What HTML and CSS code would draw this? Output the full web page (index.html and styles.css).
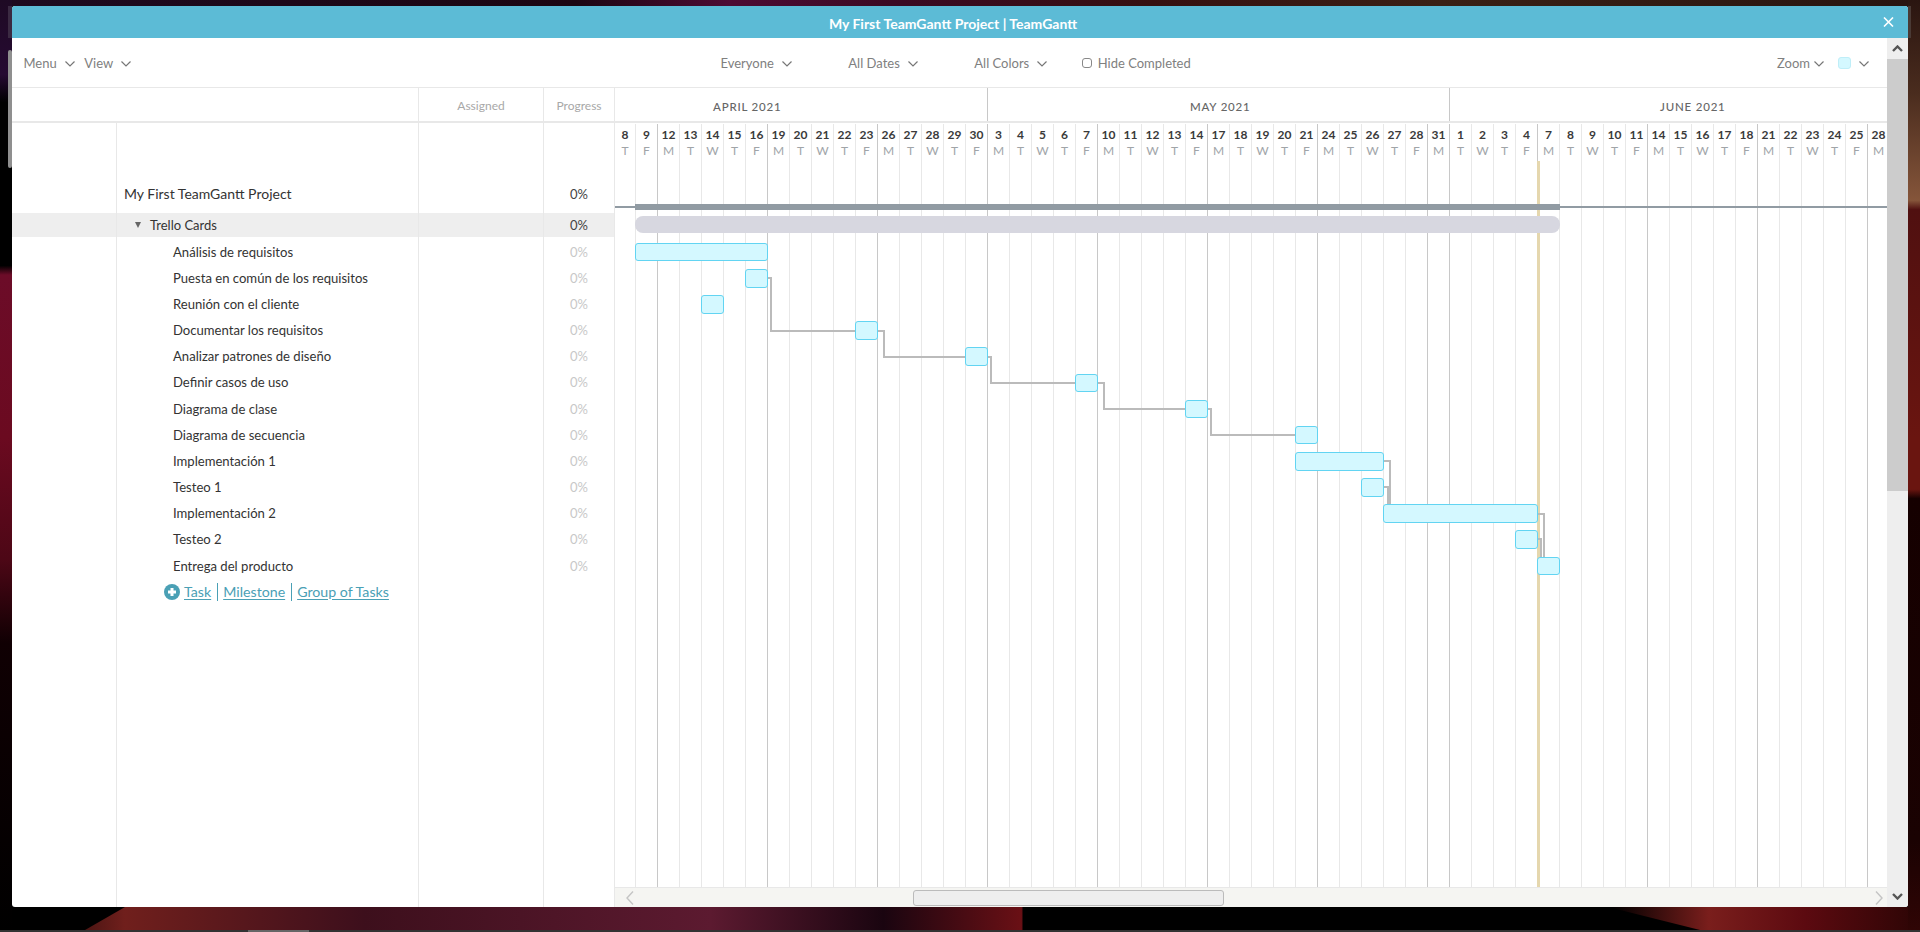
FILE: index.html
```html
<!DOCTYPE html>
<html lang="en">
  <head>
    <meta charset="UTF-8">
    <title>My First TeamGantt Project | TeamGantt</title>
    <link rel="stylesheet" href="styles.css">
  </head>
  <body>
    <svg class="wallpaper" width="1920" height="932" viewBox="0 0 1920 932">
      <defs>
        <linearGradient id="wallTop">
          <stop offset="0" stop-color="#1e0a1f"/>
          <stop offset="0.3" stop-color="#1c0612"/>
          <stop offset="0.38" stop-color="#4d0b33"/>
          <stop offset="0.47" stop-color="#3a0a22"/>
          <stop offset="0.6" stop-color="#361010"/>
          <stop offset="0.75" stop-color="#3a2015"/>
          <stop offset="1" stop-color="#281410"/>
        </linearGradient>
        <linearGradient id="wallBottom">
          <stop offset="0" stop-color="#000"/>
          <stop offset="0.065" stop-color="#701f1c"/>
          <stop offset="0.19" stop-color="#3d0f1c"/>
          <stop offset="0.37" stop-color="#5c1a30"/>
          <stop offset="0.46" stop-color="#1a0510"/>
          <stop offset="0.532" stop-color="#6a1015"/>
          <stop offset="0.533" stop-color="#000"/>
          <stop offset="0.84" stop-color="#000"/>
          <stop offset="0.89" stop-color="#7a1e1c"/>
          <stop offset="0.94" stop-color="#5c0a10"/>
          <stop offset="1" stop-color="#2c0505"/>
        </linearGradient>
        <linearGradient id="wallLeft" x2="0" y2="1">
          <stop offset="0" stop-color="#1e0a24"/>
          <stop offset="0.08" stop-color="#260a32"/>
          <stop offset="0.11" stop-color="#000"/>
          <stop offset="0.285" stop-color="#000"/>
          <stop offset="0.295" stop-color="#6c0c28"/>
          <stop offset="0.47" stop-color="#6b0a20"/>
          <stop offset="0.6" stop-color="#4d0716"/>
          <stop offset="0.69" stop-color="#100003"/>
          <stop offset="1" stop-color="#000"/>
        </linearGradient>
        <linearGradient id="wallRight" x2="0" y2="1">
          <stop offset="0" stop-color="#2a1510"/>
          <stop offset="0.1" stop-color="#4a2c1e"/>
          <stop offset="0.215" stop-color="#85553a"/>
          <stop offset="0.225" stop-color="#501010"/>
          <stop offset="0.47" stop-color="#6a1510"/>
          <stop offset="0.525" stop-color="#6a1510"/>
          <stop offset="0.535" stop-color="#150000"/>
          <stop offset="0.9" stop-color="#1a0202"/>
          <stop offset="1" stop-color="#300505"/>
        </linearGradient>
      </defs>
      <rect width="1920" height="6" fill="url(#wallTop)"/>
      <rect y="907" width="1920" height="25" fill="url(#wallBottom)"/>
      <polygon points="0,907 125,907 85,930 0,930" fill="#000"/>
      <polygon points="1608,907 1700,930 1500,930 1500,907" fill="#000"/>
      <rect width="12" height="932" fill="url(#wallLeft)"/>
      <rect x="1908" width="12" height="932" fill="url(#wallRight)"/>
      <rect x="8" y="6" width="4" height="32" fill="#3b2a42"/>
      <rect x="8" y="50" width="4" height="118" rx="2" fill="#8f8f8f"/>
      <rect x="1908" y="6" width="3" height="32" fill="#4a3a35"/>
      <rect y="930" width="1920" height="2" fill="#333"/>
      <rect x="248" y="930" width="61" height="2" fill="#666"/>
    </svg>

    <div class="modal">
      <div class="title-bar">
        <span class="title-text">My First TeamGantt Project | TeamGantt</span>
        <svg class="close" width="11" height="10" viewBox="0 0 11 10"><path d="M1 0.5 L10 9.5 M10 0.5 L1 9.5"/></svg>
      </div>

      <div class="content">
        <div class="main">
          <div class="toolbar">
            <div class="tb-group tb-left">
              <span class="tb-item">Menu <svg class="chev" viewBox="0 0 10 6"><polyline points="0.5,0.5 5,5 9.5,0.5"/></svg></span>
              <span class="tb-item">View <svg class="chev" viewBox="0 0 10 6"><polyline points="0.5,0.5 5,5 9.5,0.5"/></svg></span>
            </div>
            <div class="tb-group tb-center">
              <span class="tb-item">Everyone <svg class="chev" viewBox="0 0 10 6"><polyline points="0.5,0.5 5,5 9.5,0.5"/></svg></span>
              <span class="tb-item">All Dates <svg class="chev" viewBox="0 0 10 6"><polyline points="0.5,0.5 5,5 9.5,0.5"/></svg></span>
              <span class="tb-item">All Colors <svg class="chev" viewBox="0 0 10 6"><polyline points="0.5,0.5 5,5 9.5,0.5"/></svg></span>
              <label class="tb-item hide-completed"><input type="checkbox"> Hide Completed</label>
            </div>
            <div class="tb-group tb-right">
              <span class="tb-item zoom-item">Zoom <svg class="chev" viewBox="0 0 10 6"><polyline points="0.5,0.5 5,5 9.5,0.5"/></svg></span>
              <span class="tb-item swatch-item"><span class="swatch"></span> <svg class="chev" viewBox="0 0 10 6"><polyline points="0.5,0.5 5,5 9.5,0.5"/></svg></span>
            </div>
          </div>

          <div class="gantt">
            <div class="left-panel">
              <div class="row head-row">
                <div class="cell no-line"></div>
                <div class="cell"></div>
                <div class="cell col-head">Assigned</div>
                <div class="cell col-head">Progress</div>
              </div>
              <div class="row spacer-row">
                <div class="cell"></div><div class="cell"></div><div class="cell"></div><div class="cell"></div>
              </div>
              <div class="row project-row">
                <div class="cell"></div>
                <div class="cell name">My First TeamGantt Project</div>
                <div class="cell"></div>
                <div class="cell pct">0%</div>
              </div>
              <div class="row group-row">
                <div class="cell"></div>
                <div class="cell name"><span class="caret"></span>Trello Cards</div>
                <div class="cell"></div>
                <div class="cell pct">0%</div>
              </div>
              <div class="row gap-row">
                <div class="cell"></div><div class="cell"></div><div class="cell"></div><div class="cell"></div>
              </div>
              <div class="row task-row"><div class="cell"></div><div class="cell name">Análisis de requisitos</div><div class="cell"></div><div class="cell pct">0%</div></div>
              <div class="row task-row"><div class="cell"></div><div class="cell name">Puesta en común de los requisitos</div><div class="cell"></div><div class="cell pct">0%</div></div>
              <div class="row task-row"><div class="cell"></div><div class="cell name">Reunión con el cliente</div><div class="cell"></div><div class="cell pct">0%</div></div>
              <div class="row task-row"><div class="cell"></div><div class="cell name">Documentar los requisitos</div><div class="cell"></div><div class="cell pct">0%</div></div>
              <div class="row task-row"><div class="cell"></div><div class="cell name">Analizar patrones de diseño</div><div class="cell"></div><div class="cell pct">0%</div></div>
              <div class="row task-row"><div class="cell"></div><div class="cell name">Definir casos de uso</div><div class="cell"></div><div class="cell pct">0%</div></div>
              <div class="row task-row"><div class="cell"></div><div class="cell name">Diagrama de clase</div><div class="cell"></div><div class="cell pct">0%</div></div>
              <div class="row task-row"><div class="cell"></div><div class="cell name">Diagrama de secuencia</div><div class="cell"></div><div class="cell pct">0%</div></div>
              <div class="row task-row"><div class="cell"></div><div class="cell name">Implementación 1</div><div class="cell"></div><div class="cell pct">0%</div></div>
              <div class="row task-row"><div class="cell"></div><div class="cell name">Testeo 1</div><div class="cell"></div><div class="cell pct">0%</div></div>
              <div class="row task-row"><div class="cell"></div><div class="cell name">Implementación 2</div><div class="cell"></div><div class="cell pct">0%</div></div>
              <div class="row task-row"><div class="cell"></div><div class="cell name">Testeo 2</div><div class="cell"></div><div class="cell pct">0%</div></div>
              <div class="row task-row"><div class="cell"></div><div class="cell name">Entrega del producto</div><div class="cell"></div><div class="cell pct">0%</div></div>
              <div class="row add-row">
                <div class="cell"></div>
                <div class="cell add-links">
                  <svg class="add-icon" width="16" height="16" viewBox="0 0 16 16"><circle cx="8" cy="8" r="8"/><path d="M8 4 V12 M4 8 H12"/></svg>
                  <a href="#">Task</a><a href="#">Milestone</a><a href="#">Group of Tasks</a>
                </div>
                <div class="cell"></div>
                <div class="cell"></div>
              </div>
              <div class="row filler-row">
                <div class="cell"></div><div class="cell"></div><div class="cell"></div><div class="cell"></div>
              </div>
            </div>

            <div class="chart">
              <div class="months">
                <div class="month month-apr">APRIL 2021</div>
                <div class="month month-may">MAY 2021</div>
                <div class="month month-jun">JUNE 2021</div>
              </div>
              <div class="days">
                <div class="day first"><b>8</b><span>T</span></div>
                <div class="day strong"><b>9</b><span>F</span></div>
                <div class="day"><b>12</b><span>M</span></div>
                <div class="day"><b>13</b><span>T</span></div>
                <div class="day"><b>14</b><span>W</span></div>
                <div class="day"><b>15</b><span>T</span></div>
                <div class="day strong"><b>16</b><span>F</span></div>
                <div class="day"><b>19</b><span>M</span></div>
                <div class="day"><b>20</b><span>T</span></div>
                <div class="day"><b>21</b><span>W</span></div>
                <div class="day"><b>22</b><span>T</span></div>
                <div class="day strong"><b>23</b><span>F</span></div>
                <div class="day"><b>26</b><span>M</span></div>
                <div class="day"><b>27</b><span>T</span></div>
                <div class="day"><b>28</b><span>W</span></div>
                <div class="day"><b>29</b><span>T</span></div>
                <div class="day strong"><b>30</b><span>F</span></div>
                <div class="day"><b>3</b><span>M</span></div>
                <div class="day"><b>4</b><span>T</span></div>
                <div class="day"><b>5</b><span>W</span></div>
                <div class="day"><b>6</b><span>T</span></div>
                <div class="day strong"><b>7</b><span>F</span></div>
                <div class="day"><b>10</b><span>M</span></div>
                <div class="day"><b>11</b><span>T</span></div>
                <div class="day"><b>12</b><span>W</span></div>
                <div class="day"><b>13</b><span>T</span></div>
                <div class="day strong"><b>14</b><span>F</span></div>
                <div class="day"><b>17</b><span>M</span></div>
                <div class="day"><b>18</b><span>T</span></div>
                <div class="day"><b>19</b><span>W</span></div>
                <div class="day"><b>20</b><span>T</span></div>
                <div class="day strong"><b>21</b><span>F</span></div>
                <div class="day"><b>24</b><span>M</span></div>
                <div class="day"><b>25</b><span>T</span></div>
                <div class="day"><b>26</b><span>W</span></div>
                <div class="day"><b>27</b><span>T</span></div>
                <div class="day strong"><b>28</b><span>F</span></div>
                <div class="day strong"><b>31</b><span>M</span></div>
                <div class="day"><b>1</b><span>T</span></div>
                <div class="day"><b>2</b><span>W</span></div>
                <div class="day"><b>3</b><span>T</span></div>
                <div class="day strong"><b>4</b><span>F</span></div>
                <div class="day"><b>7</b><span>M</span></div>
                <div class="day"><b>8</b><span>T</span></div>
                <div class="day"><b>9</b><span>W</span></div>
                <div class="day"><b>10</b><span>T</span></div>
                <div class="day strong"><b>11</b><span>F</span></div>
                <div class="day"><b>14</b><span>M</span></div>
                <div class="day"><b>15</b><span>T</span></div>
                <div class="day"><b>16</b><span>W</span></div>
                <div class="day"><b>17</b><span>T</span></div>
                <div class="day strong"><b>18</b><span>F</span></div>
                <div class="day"><b>21</b><span>M</span></div>
                <div class="day"><b>22</b><span>T</span></div>
                <div class="day"><b>23</b><span>W</span></div>
                <div class="day"><b>24</b><span>T</span></div>
                <div class="day strong"><b>25</b><span>F</span></div>
                <div class="day"><b>28</b><span>M</span></div>
              </div>
              <div class="hscroll">
                <svg class="hs-arrow" width="8" height="14" viewBox="0 0 8 14"><polyline points="7,0.5 1,7 7,13.5"/></svg>
                <div class="hs-thumb"></div>
                <svg class="hs-arrow" width="8" height="14" viewBox="0 0 8 14"><polyline points="1,0.5 7,7 1,13.5"/></svg>
              </div>

              <!-- bars sit on the chart canvas, left = 22 * day index - 2 -->
              <div class="line-today"></div>
              <div class="line-project"></div>
              <div class="bar-project"></div>
              <div class="bar-group"></div>

              <svg class="links" width="1272" height="799" viewBox="0 0 1272 799">
                <polyline points="153,190 156,190 156,243 240,243"/>
                <polyline points="263,243 269,243 269,269 350,269"/>
                <polyline points="373,269 376,269 376,295 460,295"/>
                <polyline points="483,295 489,295 489,321 570,321"/>
                <polyline points="593,321 596,321 596,347 680,347"/>
                <polyline points="769,373 775,373 775,416"/>
                <polyline points="769,399 773,399 773,416"/>
                <polyline points="923,426 929,426 929,469"/>
                <polyline points="923,451 926,451 926,469"/>
              </svg>

              <div class="task-bar" style="left:20px;top:155px;width:133px;height:18px"></div>
              <div class="task-bar" style="left:130px;top:181px;width:23px;height:19px"></div>
              <div class="task-bar" style="left:86px;top:207px;width:23px;height:19px"></div>
              <div class="task-bar" style="left:240px;top:233px;width:23px;height:19px"></div>
              <div class="task-bar" style="left:350px;top:259px;width:23px;height:19px"></div>
              <div class="task-bar" style="left:460px;top:286px;width:23px;height:18px"></div>
              <div class="task-bar" style="left:570px;top:312px;width:23px;height:18px"></div>
              <div class="task-bar" style="left:680px;top:338px;width:23px;height:18px"></div>
              <div class="task-bar" style="left:680px;top:364px;width:89px;height:19px"></div>
              <div class="task-bar" style="left:746px;top:390px;width:23px;height:19px"></div>
              <div class="task-bar" style="left:768px;top:416px;width:155px;height:19px"></div>
              <div class="task-bar" style="left:900px;top:442px;width:23px;height:19px"></div>
              <div class="task-bar" style="left:922px;top:469px;width:23px;height:18px"></div>
            </div>
          </div>
        </div>

        <div class="vscroll">
          <div class="vs-btn"><svg width="11" height="7" viewBox="0 0 11 7"><polyline points="1,6 5.5,1.5 10,6"/></svg></div>
          <div class="vs-thumb"></div>
          <div class="vs-track"></div>
          <div class="vs-btn vs-down"><svg width="11" height="7" viewBox="0 0 11 7"><polyline points="1,1 5.5,5.5 10,1"/></svg></div>
        </div>
      </div>
    </div>
  </body>
</html>
```

FILE: styles.css
```css
html,
body {
  margin: 0;
  padding: 0;
}

body {
  position: relative;
  width: 1920px;
  height: 932px;
  overflow: hidden;
  background: #000;
  font-family: Lato, "Open Sans", Arial, sans-serif;
  color: #333;
}

.wallpaper {
  position: absolute;
  top: 0;
  left: 0;
}

.modal {
  position: relative;
  display: flex;
  flex-direction: column;
  width: 1896px;
  height: 901px;
  margin: 6px 0 0 12px;
  background: #fff;
  border-radius: 3px;
  overflow: hidden;
}

/* title bar */
.title-bar {
  position: relative;
  flex: 0 0 32px;
  box-sizing: border-box;
  display: flex;
  align-items: center;
  justify-content: center;
  padding: 2px 14px 0 0;
  background: #5cbbd6;
}

.title-text {
  color: #fff;
  font-size: 14px;
  font-weight: 700;
}

.close {
  position: absolute;
  top: 11px;
  right: 14px;
}

.close path {
  stroke: #fff;
  stroke-width: 1.6;
  fill: none;
}

.content {
  flex: 1;
  display: flex;
  min-height: 0;
}

.main {
  flex: 1;
  display: flex;
  flex-direction: column;
  min-width: 0;
}

/* toolbar */
.toolbar {
  flex: 0 0 50px;
  box-sizing: border-box;
  display: flex;
  justify-content: space-between;
  align-items: center;
  padding: 0 18px 0 11.5px;
  border-bottom: 1px solid #e8e8e8;
}

.tb-group {
  display: flex;
  align-items: center;
}

.tb-left {
  gap: 9.5px;
}

.tb-center {
  gap: 56.5px;
  margin-left: 3px;
}

.tb-right {
  gap: 14px;
}

.tb-item {
  display: flex;
  align-items: center;
  gap: 8px;
  color: #808080;
  font-size: 13px;
  white-space: nowrap;
}

.chev {
  width: 10px;
  height: 6px;
  margin-top: 2px;
}

.chev polyline {
  fill: none;
  stroke: #777;
  stroke-width: 1.2;
}

.zoom-item {
  gap: 4px;
}

.swatch {
  display: block;
  box-sizing: border-box;
  width: 13px;
  height: 12px;
  background: #d4f8ff;
  border: 1px solid #bfeef8;
  border-radius: 3px;
}

.hide-completed {
  gap: 6px;
  margin-left: -22px;
}

.hide-completed input {
  appearance: none;
  box-sizing: border-box;
  width: 10px;
  height: 10px;
  margin: 0;
  border: 1px solid #888;
  border-radius: 3px;
  background: #fff;
}

/* gantt */
.gantt {
  flex: 1;
  display: flex;
  min-height: 0;
}

.left-panel {
  flex: 0 0 603px;
  display: flex;
  flex-direction: column;
}

.row {
  display: grid;
  grid-template-columns: 105px 302px 125px 71px;
}

.cell {
  box-sizing: border-box;
  min-width: 0;
  border-right: 1px solid #e8e8e8;
  font-size: 13px;
}

.no-line {
  border-right: none;
}

.head-row {
  flex: 0 0 35px;
  box-sizing: border-box;
  border-bottom: 2px solid #e8e8e8;
}

.col-head {
  display: flex;
  align-items: center;
  justify-content: center;
  padding-top: 2px;
  color: #a8a8a8;
  font-size: 12px;
}

.spacer-row {
  flex: 0 0 55px;
}

.project-row {
  flex: 0 0 35px;
}

.project-row .cell {
  padding-bottom: 4px;
}

.project-row .name {
  display: flex;
  align-items: center;
  padding-left: 7px;
  color: #333;
  font-size: 14px;
}

.project-row .pct {
  color: #444;
}

.group-row {
  flex: 0 0 24px;
  background: #eee;
}

.group-row .cell {
  padding-bottom: 1px;
}

.group-row .name {
  display: flex;
  align-items: center;
  padding-left: 18px;
  color: #333;
  font-size: 13px;
}

.group-row .pct {
  color: #444;
}

.caret {
  width: 0;
  height: 0;
  margin-right: 9px;
  border-left: 3.5px solid transparent;
  border-right: 3.5px solid transparent;
  border-top: 6px solid #666;
}

.gap-row {
  flex: 0 0 1.6px;
}

.task-row {
  flex: 0 0 26.17px;
}

.task-row .name {
  display: flex;
  align-items: center;
  padding-left: 56px;
  color: #333;
  font-size: 13.1px;
}

.pct {
  display: flex;
  align-items: center;
  justify-content: center;
  color: #c8c8c8;
  font-size: 13px;
}

.add-row {
  flex: 0 0 26px;
}

.add-links {
  display: flex;
  align-items: center;
  padding-left: 47px;
  font-size: 14.2px;
}

.add-links a {
  color: #4aa0b5;
  padding: 0 6px 0 5px;
  line-height: 18px;
  border-left: 1px solid #4aa0b5;
  text-decoration: underline;
  text-underline-offset: 2px;
}

.add-links a:first-of-type {
  padding-left: 4px;
  border-left: none;
}

.add-icon circle {
  fill: #4aa0b5;
}

.add-icon path {
  stroke: #fff;
  stroke-width: 3;
  fill: none;
}

.filler-row {
  flex: 1;
}

/* chart */
.chart {
  position: relative;
  flex: 1;
  display: flex;
  flex-direction: column;
  min-width: 0;
  overflow: hidden;
}

.months {
  flex: 0 0 35px;
  box-sizing: border-box;
  display: flex;
  border-bottom: 2px solid #e8e8e8;
}

.month {
  box-sizing: border-box;
  display: flex;
  align-items: center;
  padding-top: 3px;
  border-right: 1px solid #c8c8c8;
  color: #666;
  font-size: 11.5px;
  font-weight: 500;
  letter-spacing: 0.8px;
  white-space: nowrap;
}

.month-apr {
  flex: 0 0 373px;
  padding-left: 98px;
}

.month-may {
  flex: 0 0 462px;
  padding-left: 202px;
}

.month-jun {
  flex: 1;
  padding-left: 210px;
  border-right: none;
}

.days {
  flex: 1;
  display: flex;
  min-height: 0;
  padding-top: 1px;
}

.day {
  flex: 0 0 22px;
  box-sizing: border-box;
  display: flex;
  flex-direction: column;
  align-items: center;
  padding-top: 2px;
  border-right: 1px solid #e8e8e8;
}

.day.first {
  flex-basis: 21px;
}

.day.strong {
  border-right-color: #c8c8c8;
}

.day b {
  color: #3a3a3a;
  font-size: 12px;
  font-weight: 700;
  line-height: 18px;
}

.day span {
  color: #a0a4a8;
  font-size: 12px;
  line-height: 14px;
}

.hscroll {
  flex: 0 0 20px;
  box-sizing: border-box;
  display: flex;
  align-items: center;
  padding: 0 4px 0 11px;
  background: #f5f5f2;
  border-top: 1px solid #e8e8e8;
}

.hs-thumb {
  box-sizing: border-box;
  width: 311px;
  height: 16px;
  margin: 0 auto 0 279px;
  background: #eee;
  border: 1px solid #bbb;
  border-radius: 3px;
}

.hs-arrow polyline {
  fill: none;
  stroke: #c4c4c4;
  stroke-width: 1.4;
}

/* things drawn over the chart */
.line-today {
  position: absolute;
  left: 922px;
  top: 73px;
  width: 3px;
  height: 726px;
  background: #e5d7ae;
}

.line-project {
  position: absolute;
  left: 0;
  right: 0;
  top: 118px;
  height: 2px;
  background: #919ba3;
}

.bar-project {
  position: absolute;
  left: 20px;
  top: 116px;
  width: 925px;
  height: 6px;
  background: #919ba3;
}

.bar-group {
  position: absolute;
  left: 20px;
  top: 128px;
  width: 925px;
  height: 17px;
  background: #d7d7e0;
  border-radius: 8px;
}

.links {
  position: absolute;
  top: 0;
  left: 0;
}

.links polyline {
  fill: none;
  stroke: #bbb;
  stroke-width: 2;
}

.task-bar {
  position: absolute;
  box-sizing: border-box;
  background: #d4f8ff;
  border: 1px solid #62d4f2;
  border-radius: 3px;
}

/* vertical scrollbar */
.vscroll {
  flex: 0 0 21px;
  display: flex;
  flex-direction: column;
  background: #eee;
}

.vs-btn {
  flex: 0 0 21px;
  display: flex;
  align-items: center;
  justify-content: center;
}

.vs-btn polyline {
  fill: none;
  stroke: #555;
  stroke-width: 2.4;
}

.vs-thumb {
  flex: 0 0 432px;
  background: #ccc;
}

.vs-track {
  flex: 1;
}
```
